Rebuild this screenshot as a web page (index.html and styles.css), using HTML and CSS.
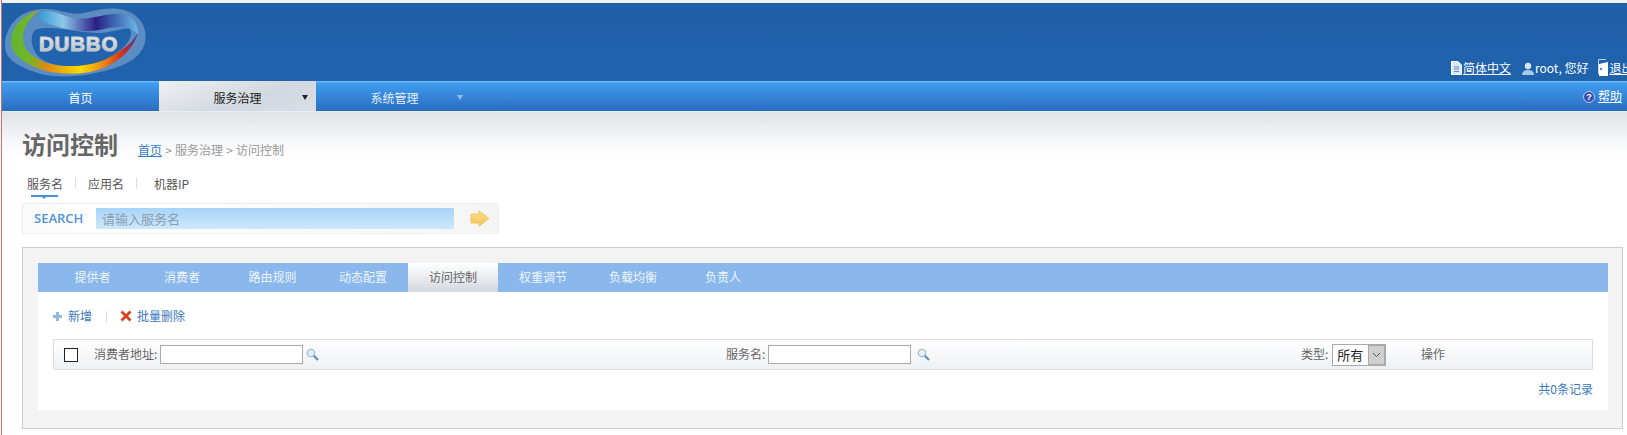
FILE: index.html
```html
<!DOCTYPE html>
<html lang="zh">
<head>
<meta charset="utf-8">
<title>访问控制</title>
<link rel="stylesheet" href="styles.css">
</head>
<body>
<div class="page">
  <header class="head">
    <svg class="logo" width="148" height="76" viewBox="3 3 148 76">
      <defs>
        <linearGradient id="ring" gradientUnits="userSpaceOnUse" x1="11" y1="0" x2="138" y2="0">
          <stop offset="0" stop-color="#62b52e"/>
          <stop offset="0.14" stop-color="#72b52a"/>
          <stop offset="0.28" stop-color="#e08a12"/>
          <stop offset="0.55" stop-color="#fbdc00"/>
          <stop offset="0.72" stop-color="#f08a10"/>
          <stop offset="0.88" stop-color="#d42c1c"/>
          <stop offset="1" stop-color="#4a2a8a"/>
        </linearGradient>
        <linearGradient id="top" gradientUnits="userSpaceOnUse" x1="38" y1="0" x2="138" y2="0">
          <stop offset="0" stop-color="#2f9ad4"/>
          <stop offset="0.25" stop-color="#8fc8e8"/>
          <stop offset="0.58" stop-color="#2a1e84"/>
          <stop offset="0.75" stop-color="#3c62b0"/>
          <stop offset="1" stop-color="#6db8e6"/>
        </linearGradient>
        <linearGradient id="word" x1="0" y1="0" x2="0" y2="1">
          <stop offset="0" stop-color="#ffffff"/>
          <stop offset="1" stop-color="#b0b6c0"/>
        </linearGradient>
      </defs>
      <path d="M5 45C5 28 18 10 42 9C60 8 70 16 84 13C104 8 122 5 136 16C146 24 148 38 143 48C136 62 118 68 100 72C80 77 52 79 32 71C14 64 5 58 5 45Z" fill="#5b8cc2"/>
      <path d="M40 10C24 14 11 26 11 42C11 52 20 60 32 66C48 74 76 76 94 71C114 66 132 52 138 33C132 44 120 53 102 60C84 67 60 68 44 62C32 57 24 50 23 40C22 28 30 17 40 10Z" fill="url(#ring)"/>
      <path d="M40 12C52 8 62 16 74 18C90 21 106 12 124 14C134 17 138 24 138 34C130 27 118 25 104 29C84 34 60 30 38 19Z" fill="url(#top)"/>
      <path d="M35 30C50 24 76 33 100 33C112 33 124 27 130 29C135 38 122 52 104 60C84 68 56 68 43 60C33 54 28 38 35 30Z" fill="#2163ad"/>
      <text class="logo-word" x="39" y="51" fill="url(#word)">DUBBO</text>
    </svg>
    <div class="userbar">
      <span class="ub-item">
        <svg class="ub-icon" width="11" height="14" viewBox="0 0 11 14"><path d="M.5.5H7L10.5 4V13.5H.5Z" fill="#dce8f5" stroke="#fff"/><path d="M3 6H8M3 8H8M3 10.500H8" stroke="#5f8fc4"/></svg>
        <a class="ub-link" href="#">简体中文</a>
      </span>
      <span class="ub-item ub-root">
        <svg class="ub-icon" width="12" height="13" viewBox="0 0 12 13"><circle cx="6" cy="4" r="3.200" fill="#d5e4f2"/><path d="M0 13C0 9 3 8 6 8S12 9 12 13Z" fill="#a9c9e8"/></svg>
        <span>root, 您好</span>
      </span>
      <span class="ub-item ub-exit">
        <svg class="ub-icon" width="11" height="18" viewBox="0 0 11 18"><path d="M.5 15V.5H8" fill="none" stroke="#b8d0e8"/><path d="M1 5L10 3V17H1Z" fill="#fff"/><circle cx="3" cy="10" r="1" fill="#1f60a8"/></svg>
        <a class="ub-link" href="#">退出</a>
      </span>
    </div>
  </header>
  <nav class="nav">
    <a class="nav-item" href="#">首页</a>
    <a class="nav-item nav-active" href="#">服务治理<i class="caret caret-dark"></i></a>
    <a class="nav-item nav-system" href="#">系统管理<i class="caret caret-light"></i></a>
    <span class="nav-help">
      <svg width="12" height="12" viewBox="0 0 12 12"><circle cx="6" cy="6" r="5.500" fill="#3b4fae" stroke="#b9c9ea"/><text class="help-q" x="6" y="9" fill="#fff" text-anchor="middle">?</text></svg>
      <a class="ub-link" href="#">帮助</a>
    </span>
  </nav>
  <main class="content">
    <div class="titlebar">
      <h1 class="title">访问控制</h1>
      <div class="crumbs"><a class="crumb-link" href="#">首页</a> &gt; 服务治理 &gt; 访问控制</div>
    </div>
    <div class="stabs">
      <span class="stab stab-on">服务名</span>
      <span class="stab-sep"></span>
      <span class="stab stab-app">应用名</span>
      <span class="stab-sep"></span>
      <span class="stab stab-ip">机器IP</span>
    </div>
    <div class="searchbox">
      <span class="search-label">SEARCH</span>
      <div class="search-input">请输入服务名</div>
      <svg class="search-go" width="20" height="17" viewBox="0 0 20 17">
        <defs><linearGradient id="go" x1="0" y1="0" x2="0" y2="1"><stop offset="0" stop-color="#fbe08e"/><stop offset="1" stop-color="#f4c04e"/></linearGradient></defs>
        <path d="M1 4H9V.8L19 8.500L9 16.200V13H1Z" fill="url(#go)" stroke="#efc566"/>
      </svg>
    </div>
    <section class="panel">
      <div class="panel-inner">
        <div class="tabs">
          <a class="tab" href="#">提供者</a>
          <a class="tab" href="#">消费者</a>
          <a class="tab" href="#">路由规则</a>
          <a class="tab" href="#">动态配置</a>
          <a class="tab tab-on" href="#">访问控制</a>
          <a class="tab" href="#">权重调节</a>
          <a class="tab" href="#">负载均衡</a>
          <a class="tab" href="#">负责人</a>
        </div>
        <div class="tools">
          <svg class="tool-plus" width="9" height="9" viewBox="0 0 9 9"><path d="M3 0H6V3H9V6H6V9H3V6H0V3H3Z" fill="#8fbadf"/></svg>
          <a class="tool-link" href="#">新增</a>
          <span class="tool-sep"></span>
          <svg width="12" height="12" viewBox="0 0 12 12"><path d="M1.500 1.500L10.500 10.500M10.500 1.500L1.500 10.500" stroke="#d9401f" stroke-width="2.800"/></svg>
          <a class="tool-link" href="#">批量删除</a>
        </div>
        <div class="thead">
          <div class="col col-a">
            <span class="check"></span>
            <span class="lbl lbl-first">消费者地址:</span>
            <span class="field"></span>
            <svg class="mag" width="13" height="13" viewBox="0 0 13 13"><circle cx="5" cy="5" r="3.700" fill="#e4eff7" stroke="#a9bccb" stroke-width="1.300"/><path d="M7.800 7.800L12 12" stroke="#4f94c4" stroke-width="2.200"/></svg>
          </div>
          <div class="col col-b">
            <span class="lbl">服务名:</span>
            <span class="field"></span>
            <svg class="mag mag-b" width="13" height="13" viewBox="0 0 13 13"><circle cx="5" cy="5" r="3.700" fill="#e4eff7" stroke="#a9bccb" stroke-width="1.300"/><path d="M7.800 7.800L12 12" stroke="#4f94c4" stroke-width="2.200"/></svg>
          </div>
          <div class="col col-c">
            <span class="lbl">类型:</span>
            <span class="select"><span class="sel-text">所有</span><span class="sel-btn"><svg width="9" height="6" viewBox="0 0 9 6"><path d="M1 1L4.500 4.500L8 1" fill="none" stroke="#555"/></svg></span></span>
          </div>
          <div class="col col-d"><span class="lbl">操作</span></div>
        </div>
        <div class="total">共0条记录</div>
      </div>
    </section>
  </main>
</div>
</body>
</html>
```
FILE: styles.css
```css
* { box-sizing: border-box; }
html, body { margin: 0; padding: 0; height: 100%; }
body {
  background: #fff;
  overflow: hidden;
  font: 12px/1.2 "Noto Sans CJK SC", "Liberation Sans", sans-serif;
  color: #666;
}
a { color: inherit; }
.page {
  width: 1626px;
  height: 435px;
  margin-left: 1px;
  padding-top: 3px;
  border-left: 1px solid #d96a6a;
  background: linear-gradient(#f2f2f2 3px, #fff 3px);
}
.head {
  height: 78px;
  background: linear-gradient(#1f5fa8, #2063ad);
  display: flex;
  justify-content: space-between;
  align-items: flex-end;
  overflow: hidden;
}
.logo { margin-left: 1px; align-self: flex-start; flex: none; }
.logo-word {
  font: bold 20.500px "Liberation Sans", sans-serif;
  letter-spacing: 0.8px;
  stroke: #c4cad2;
  stroke-width: 1.1px;
}
.userbar {
  display: flex;
  width: 176px;
  flex: none;
  gap: 11px;
  color: #fff;
  padding-bottom: 4px;
  white-space: nowrap;
  overflow: hidden;
}
.ub-item { display: flex; align-items: center; gap: 1px; flex: none; }
.ub-root { margin-right: -2px; }
.ub-exit { gap: 1px; }
.ub-link { color: #fff; text-decoration: underline; }
.nav {
  height: 31px;
  display: flex;
  align-items: stretch;
  background: linear-gradient(#6fb6f5 0, #6fb6f5 1px, #3f9cf0 2px, #2a6cc0 100%);
  border-bottom: 1px solid #e5edf5;
  color: #fff;
}
.nav-item {
  width: 157px;
  display: flex;
  align-items: center;
  justify-content: center;
  position: relative;
  text-decoration: none;
  color: #fff;
  padding-top: 4px;
}
.nav-active {
  background: linear-gradient(160deg, #eef0f3, #d2d8df 60%, #d9dee4);
  color: #222;
}
.nav-system { padding-top: 5px; color: #e6f0fb; }
.caret {
  position: absolute;
  top: 14px;
  width: 0;
  height: 0;
  border-left: 3px solid transparent;
  border-right: 3px solid transparent;
}
.caret-dark { right: 8px; border-top: 5px solid #222; }
.caret-light { right: 10px; border-top: 5px solid #8fc0ee; }
.nav-help {
  margin-left: auto;
  margin-right: 5px;
  display: flex;
  align-items: center;
  gap: 3px;
  padding-top: 1px;
}
.help-q { font: bold 9px "Liberation Sans", sans-serif; }
.content {
  height: 323px;
  background: linear-gradient(#dfe2e6 0, #f4f5f7 26px, #fff 44px);
  padding: 0 0 0 20px;
}
.titlebar { display: flex; align-items: flex-end; height: 51px; }
.title {
  margin: 0 0 1px;
  font: bold 24px/36px "Noto Sans CJK SC", sans-serif;
  color: #666;
  width: 116px;
}
.crumbs { color: #999; font-size: 12px; line-height: 17px; padding-bottom: 5px; word-spacing: 0.5px; }
.crumb-link { color: #2f7cc4; }
.stabs {
  height: 40px;
  display: flex;
  align-items: flex-start;
  padding: 12px 0 0 5px;
  color: #555;
}
.stab { line-height: 17px; }
.stab-on { position: relative; width: 36px; }
.stab-on::after {
  content: "";
  position: absolute;
  left: 4px;
  top: 20px;
  width: 27px;
  height: 2px;
  background: #4a90d9;
}
.stab-on::before {
  content: "";
  position: absolute;
  left: 15px;
  top: 22px;
  border-left: 2px solid transparent;
  border-right: 2px solid transparent;
  border-top: 2px solid #4a90d9;
}
.stab-sep { width: 1px; height: 11px; background: #ddd; margin: 3px 12px 0; }
.stab-app { width: 36px; }
.stab-ip { margin-left: 5px; }
.searchbox {
  width: 477px;
  height: 31px;
  border: 1px solid #eee;
  border-radius: 2px;
  background: linear-gradient(90deg, #fafafa, #fff 20%, #f5f5f5);
  display: flex;
  align-items: center;
  padding-left: 11px;
}
.search-label {
  width: 62px;
  padding-bottom: 2px;
  font: 600 13px "Open Sans", sans-serif;
  color: #4f94dc;
  flex: none;
}
.search-input {
  width: 358px;
  height: 21px;
  background: linear-gradient(#a9d4f6, #cde8fb);
  color: #8b9db0;
  font-size: 13px;
  line-height: 21px;
  padding-left: 6px;
  flex: none;
}
.search-go { margin-left: 16px; flex: none; }
.panel {
  width: 1601px;
  height: 182px;
  margin-top: 13px;
  border: 1px solid #ccc;
  background: #f3f3f3;
  padding: 15px 14px 17px 15px;
}
.panel-inner { background: #fff; height: 147px; }
.tabs {
  height: 29px;
  display: flex;
  background: #8ab8ec;
}
.tab {
  width: 90px;
  display: flex;
  align-items: center;
  justify-content: center;
  color: #eef5fd;
  text-decoration: none;
}
.tab:first-child { margin-left: 10px; width: 89px; }
.tab:nth-child(3) { width: 91px; }
.tab-on {
  background: linear-gradient(#fff, #d3d8df);
  color: #666;
}
.tools {
  height: 47px;
  display: flex;
  align-items: center;
  padding: 1px 0 0 15px;
  gap: 4px;
}
.tool-link { color: #3a78bd; text-decoration: none; }
.tool-plus + .tool-link { margin-left: 2px; }
.tool-sep { width: 1px; height: 11px; background: #ddd; margin: 0 9px 0 10px; }
.tool-sep + svg { margin-right: 1px; }
.thead {
  width: 1540px;
  height: 31px;
  margin-left: 15px;
  border: 1px solid #ddd;
  background: linear-gradient(#fff, #eef1f4);
  display: flex;
  align-items: center;
}
.col { display: flex; align-items: center; height: 100%; flex: none; }
.col-a { width: 672px; padding-left: 10px; }
.col-b { width: 575px; }
.col-c { width: 120px; }
.check {
  width: 14px;
  height: 14px;
  border: 1px solid #222;
  background: #fff;
}
.lbl { color: #666; white-space: nowrap; }
.lbl-first { margin-left: 16px; }
.field {
  width: 143px;
  height: 19px;
  margin: 0 3px;
  border: 1px solid #aaa;
  background: #fff;
}
.mag { flex: none; }
.mag-b { margin-left: 3px; }
.select {
  display: flex;
  width: 54px;
  height: 22px;
  margin-left: 4px;
  border: 1px solid #aaa;
  background: #fff;
}
.sel-text { flex: 1; color: #222; font-size: 13px; line-height: 20px; padding-left: 4px; }
.sel-btn {
  width: 17px;
  display: flex;
  align-items: center;
  justify-content: center;
  background: #cfcfcf;
  border: 1px solid #aaa;
}
.total {
  width: 1555px;
  padding-top: 10px;
  text-align: right;
  color: #3a78bd;
  line-height: 17px;
}
```
